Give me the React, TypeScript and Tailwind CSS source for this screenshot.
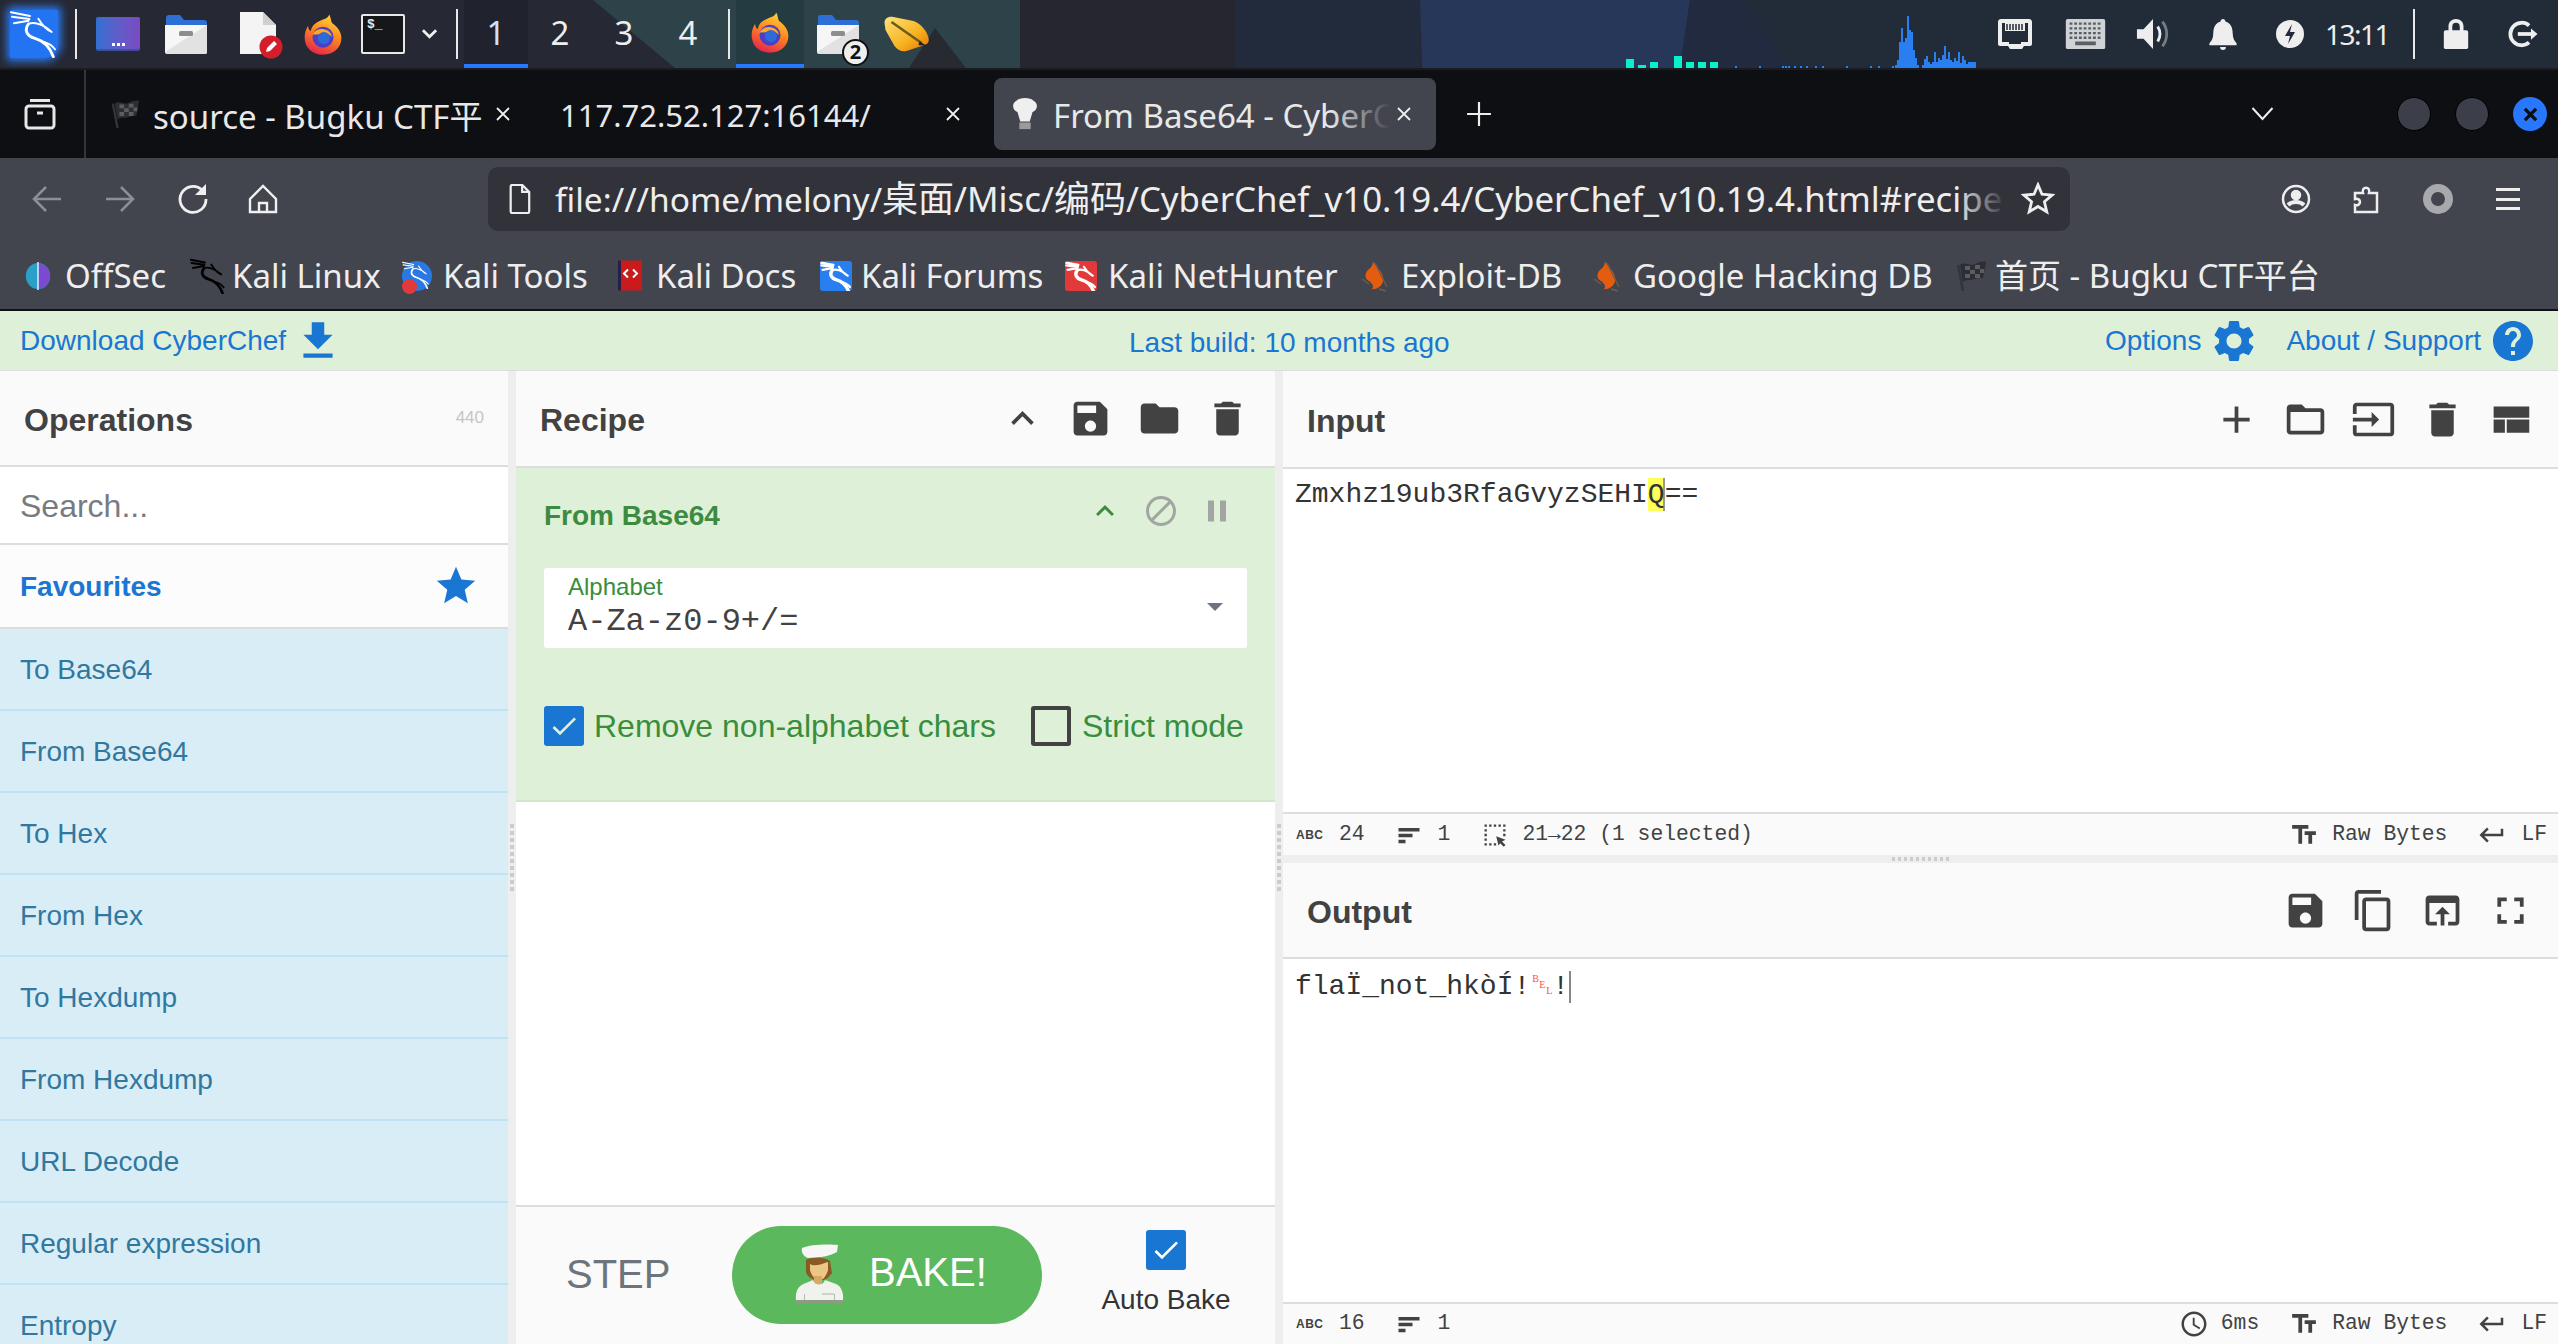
import React from "react";

const P: Record<string, string> = {
  save: "M17 3H5c-1.11 0-2 .9-2 2v14c0 1.1.89 2 2 2h14c1.1 0 2-.9 2-2V7l-4-4zm-5 16c-1.66 0-3-1.34-3-3s1.34-3 3-3 3 1.34 3 3-1.34 3-3 3zm3-10H5V5h10v4z",
  folder: "M10 4H4c-1.1 0-1.99.9-1.99 2L2 18c0 1.1.9 2 2 2h16c1.1 0 2-.9 2-2V8c0-1.1-.9-2-2-2h-8l-2-2z",
  folderOpen: "M20 6h-8l-2-2H4c-1.1 0-1.99.9-1.99 2L2 18c0 1.1.9 2 2 2h16c1.1 0 2-.9 2-2V8c0-1.1-.9-2-2-2zm0 12H4V8h16v10z",
  del: "M6 19c0 1.1.9 2 2 2h8c1.1 0 2-.9 2-2V7H6v12zM19 4h-3.5l-1-1h-5l-1 1H5v2h14V4z",
  up: "M7.41 15.41L12 10.83l4.59 4.58L18 14l-6-6-6 6z",
  block: "M12 2C6.48 2 2 6.48 2 12s4.48 10 10 10 10-4.48 10-10S17.52 2 12 2zM4 12c0-4.42 3.58-8 8-8 1.85 0 3.55.63 4.9 1.69L5.69 16.9C4.63 15.55 4 13.85 4 12zm8 8c-1.85 0-3.55-.63-4.9-1.69L18.31 7.1C19.37 8.45 20 10.15 20 12c0 4.42-3.58 8-8 8z",
  pause: "M6 19h4V5H6v14zm8-14v14h4V5h-4z",
  add: "M19 13h-6v6h-2v-6H5v-2h6V5h2v6h6v2z",
  input: "M21 3.01H3c-1.1 0-2 .9-2 2V9h2V4.99h18v14.03H3V15H1v4.01c0 1.1.9 1.98 2 1.98h18c1.1 0 2-.88 2-1.98v-14c0-1.11-.9-2-2-2zM11 16l4-4-4-4v3H1v2h10v3z",
  view: "M3 19h6v-7H3v7zm7 0h12v-7H10v7zM3 5v6h19V5H3z",
  copy: "M16 1H4c-1.1 0-2 .9-2 2v14h2V3h12V1zm3 4H8c-1.1 0-2 .9-2 2v14c0 1.1.9 2 2 2h11c1.1 0 2-.9 2-2V7c0-1.1-.9-2-2-2zm0 16H8V7h11v14z",
  open: "M19 4H5c-1.11 0-2 .9-2 2v12c0 1.1.89 2 2 2h4v-2H5V8h14v10h-4v2h4c1.1 0 2-.9 2-2V6c0-1.1-.89-2-2-2zm-7 6l-4 4h3v6h2v-6h3l-4-4z",
  full: "M7 14H5v5h5v-2H7v-3zm-2-4h2V7h3V5H5v5zm12 7h-3v2h5v-5h-2v3zM14 5v2h3v3h2V5h-5z",
  tt: "M2.5 4v3h5v12h3V7h5V4h-13zm19 5h-9v3h3v7h3v-7h3V9z",
  ret: "M19 7v4H5.83l3.58-3.59L8 6l-6 6 6 6 1.41-1.41L5.83 13H21V7z",
  time: "M11.99 2C6.47 2 2 6.48 2 12s4.47 10 9.99 10C17.52 22 22 17.52 22 12S17.52 2 11.99 2zM12 20c-4.42 0-8-3.58-8-8s3.58-8 8-8 8 3.58 8 8-3.58 8-8 8zm.5-13H11v6l5.25 3.15.75-1.23-4.5-2.67z",
  settings: "M19.14 12.94c.04-.3.06-.61.06-.94 0-.32-.02-.64-.07-.94l2.03-1.58c.18-.14.23-.41.12-.61l-1.92-3.32c-.12-.22-.37-.29-.59-.22l-2.39.96c-.5-.38-1.03-.7-1.62-.94l-.36-2.54c-.04-.24-.24-.41-.48-.41h-3.84c-.24 0-.43.17-.47.41l-.36 2.54c-.59.24-1.13.57-1.62.94l-2.39-.96c-.22-.08-.47 0-.59.22L2.74 8.87c-.12.21-.08.47.12.61l2.03 1.58c-.05.3-.09.63-.09.94s.02.64.07.94l-2.03 1.58c-.18.14-.23.41-.12.61l1.92 3.32c.12.22.37.29.59.22l2.39-.96c.5.38 1.03.7 1.62.94l.36 2.54c.05.24.24.41.48.41h3.84c.24 0 .44-.17.47-.41l.36-2.54c.59-.24 1.13-.56 1.62-.94l2.39.96c.22.08.47 0 .59-.22l1.92-3.32c.12-.22.07-.47-.12-.61l-2.01-1.58zM12 15.6c-1.98 0-3.6-1.62-3.6-3.6s1.62-3.6 3.6-3.6 3.6 1.62 3.6 3.6-1.62 3.6-3.6 3.6z",
  help: "M12 2C6.48 2 2 6.48 2 12s4.48 10 10 10 10-4.48 10-10S17.52 2 12 2zm1 17h-2v-2h2v2zm2.07-7.75l-.9.92C13.45 12.9 13 13.5 13 15h-2v-.5c0-1.1.45-2.1 1.17-2.83l1.24-1.26c.37-.36.59-.86.59-1.41 0-1.1-.9-2-2-2s-2 .9-2 2H8c0-2.21 1.79-4 4-4s4 1.79 4 4c0 .88-.36 1.68-.93 2.25z",
  down: "M19 9h-4V3H9v6H5l7 7 7-7zM5 18v2h14v-2H5z",
  star: "M12 17.27L18.18 21l-1.64-7.03L22 9.24l-7.19-.61L12 2 9.19 8.63 2 9.24l5.46 4.73L5.82 21z",
  check: "M9 16.17L4.83 12l-1.42 1.41L9 19 21 7l-1.41-1.41z",
  lines: "M3 6h18v3H3zM3 11h12v3H3zM3 16h6v3H3z",
  select: "M3 3h2v2H3zM7 3h2v2H7zM11 3h2v2h-2zM15 3h2v2h-2zM19 3h2v2h-2zM3 7h2v2H3zM19 7h2v2h-2zM3 11h2v2H3zM19 11h2v2h-2zM3 15h2v2H3zM3 19h2v2H3zM7 19h2v2H7zM11 19h2v2h-2zM13 13l8 3-3 1.5 3 3-1.5 1.5-3-3L15 21z",
};

function I({ n, c = "w-[45px] h-[45px] text-[#424242]" }: { n: string; c?: string }) {
  return (
    <svg viewBox="0 0 24 24" className={c} fill="currentColor">
      <path d={P[n]} />
    </svg>
  );
}

function Dragon({ stroke = "#fff", w = 8, c }: { stroke?: string; w?: number; c: string }) {
  return (
    <svg viewBox="0 0 144 144" className={c} fill="none" stroke={stroke} strokeWidth={w} strokeLinecap="round" strokeLinejoin="round">
      <path d="M3 7 60 18M6 20 58 27M12 40 56 32" strokeWidth={w * 0.75} />
      <path d="M55 42C42 60 50 78 75 85C100 92 120 112 130 140" strokeWidth={w * 1.1} />
      <path d="M55 42C70 34 100 42 125 66C110 60 100 50 85 26" strokeWidth={w * 0.7} />
      <path d="M102 96C115 100 128 108 135 118" strokeWidth={w * 0.7} />
    </svg>
  );
}

function Firefox({ c }: { c: string }) {
  return (
    <svg viewBox="0 0 48 48" className={c}>
      <defs>
        <linearGradient id="ffg" x1="0.7" y1="0" x2="0.3" y2="1">
          <stop offset="0" stopColor="#ffd53a" />
          <stop offset="0.45" stopColor="#ff8a1f" />
          <stop offset="1" stopColor="#e5234d" />
        </linearGradient>
      </defs>
      <path d="M31 1c3 5 1 8 5 11 6 5 9 10 9 16 0 11-9 19-21 19S3 39 3 27c0-5 2-10 4-13 0 3 1 5 3 6 1-6 5-9 9-11 5-3 11-3 12-8z" fill="url(#ffg)" />
      <circle cx="24" cy="27" r="12" fill="#4a3fc5" />
      <path d="M12 24c3-5 8-7 13-6 6 1 9 5 9 9-3-4-7-5-12-4-4 1-7 1-10 1z" fill="#ffa52c" />
      <circle cx="25" cy="28" r="7" fill="#2f6bd6" />
    </svg>
  );
}

function FilesIcon({ c }: { c: string }) {
  return (
    <svg viewBox="0 0 44 40" className={c}>
      <path d="M2 4c0-2 1-3 3-3h11l4 5h20c2 0 3 1 3 3v5H2z" fill="#2e6fd6" />
      <path d="M1 11h42v27c0 1-1 2-2 2H3c-1 0-2-1-2-2z" fill="#f6f6f6" />
      <path d="M1 38 43 11v27c0 1-1 2-2 2H3z" fill="#e2e2e2" />
      <rect x="15" y="17" width="14" height="5" rx="1.5" fill="#8d8d8d" />
    </svg>
  );
}

function Pen({ c }: { c: string }) {
  return (
    <svg viewBox="0 0 46 36" className={c}>
      <defs>
        <linearGradient id="peng" x1="0" y1="0" x2="1" y2="1">
          <stop offset="0" stopColor="#ffe27a" />
          <stop offset="0.6" stopColor="#f7b21f" />
          <stop offset="1" stopColor="#e66f08" />
        </linearGradient>
      </defs>
      <path d="M1 7C1 2 5 0 10 1l20 4c8 3 14 11 15 17 1 4-1 6-4 7l-18 6c-5 1-9-1-12-5L2 14z" fill="url(#peng)" />
      <path d="M8 6l30 21" stroke="#6b5a1a" strokeWidth="2.500" />
      <path d="M36 25l7 5-8-1z" fill="#222" />
    </svg>
  );
}

function Flag({ c }: { c: string }) {
  return (
    <svg viewBox="0 0 34 34" className={c}>
      <path d="M3 6 8 32" stroke="#33353c" strokeWidth="2.500" />
      <path d="M5 6c6-4 10 2 15-1 4-2 8-3 11-2l-3 16c-5-1-8 2-13 2-3 0-5 0-7 2z" fill="#2c2e33" />
      <path d="M10 7h5v4h-5zM20 6h5v4h-5zM15 11h5v4h-5zM25 10h4v4h-4zM10 15h5v4h-5zM20 15h5v4h-5z" fill="#5b5d62" />
    </svg>
  );
}

function Flame({ c }: { c: string }) {
  return (
    <svg viewBox="0 0 28 34" className={c}>
      <path d="M12 2c1 5 12 11 10 20-1 6-8 9-11 8 2-2 1-5-3-8-4-2-5-7-1-11 3-2 5-5 5-9z" fill="#e45c0e" />
      <path d="M14 4 26 28M8 25 1 20M18 30l7 2" stroke="#6d5d50" strokeWidth="1.400" fill="none" />
    </svg>
  );
}

function Chef({ c }: { c: string }) {
  return (
    <svg viewBox="33 13 51 60" className={c}>
      <path d="M35 70h49v3H35z" fill="#8d9a84" />
      <path d="M46 30C50 27 65 27 70 31L72 43C68 48 66 50 62 50H55C50 48 47 46 46 42z" fill="#8a5a24" />
      <path d="M50 34C54 37 62 34 68 32V40C66 47 62 51 58 51 54 49 51 44 50 40z" fill="#ecc684" />
      <path d="M54 46h8v9h-8z" fill="#d6a866" />
      <path d="M36 70C35 62 38 55 46 53L53 50C55 56 63 56 65 50L76 54C81 56 84 63 83 70z" fill="#f0f2ee" />
      <path d="M42 18C50 14 70 14 78 15L77 22C70 26 62 27 60 27L48 28C43 26 41 22 42 18z" fill="#f6f6f6" />
      <path d="M62 63h12v2H62z" fill="#cfd2cb" />
      <path d="M44 64h1v6h-1zM74 64h1v6h-1z" fill="#b6b9b0" />
    </svg>
  );
}

const teal: [number, number][] = [[1626, 9], [1638, 3], [1650, 6], [1674, 12], [1686, 6], [1698, 6], [1710, 6]];
const blueBars: [number, number][] = [
  [1735, 2], [1759, 2], [1782, 2], [1785, 2], [1788, 2], [1794, 2], [1800, 2], [1806, 2], [1815, 2], [1822, 2], [1846, 2], [1870, 2], [1878, 2],
  [1892, 2], [1895, 3], [1897, 8], [1899, 26], [1901, 40], [1903, 26], [1905, 30], [1907, 52], [1909, 38], [1911, 36], [1913, 18], [1915, 10], [1917, 3],
  [1922, 3], [1924, 9], [1926, 12], [1928, 6], [1930, 4], [1932, 6], [1934, 16], [1936, 6], [1938, 10], [1940, 8], [1942, 13], [1944, 22], [1946, 9], [1948, 16], [1950, 8], [1952, 6], [1954, 10], [1956, 7], [1958, 16], [1960, 5], [1962, 12], [1964, 8], [1966, 4], [1968, 6], [1970, 6], [1972, 6], [1974, 6],
];

function TaskIconBg() {
  return (
    <svg className="absolute left-0 top-0 w-[2558px] h-[68px]" viewBox="0 0 2558 68" preserveAspectRatio="none">
      <rect width="2558" height="68" fill="#262833" />
      <path d="M593 0 675 68H1020V0z" fill="#2e4349" />
      <path d="M909 68 935 28 966 68z" fill="#272a31" />
      <path d="M1020 0H1235V68H1020z" fill="#26272e" />
      <path d="M1235 0H1420V68H1235z" fill="#222b3b" />
      <path d="M1420 0H1690L1680 68H1422z" fill="#27375a" />
      <path d="M1690 0H1745L1790 68H1680z" fill="#222a40" />
      <path d="M1745 0H2558V68H1790z" fill="#212c38" />
      {teal.map(([x, h]) => (
        <rect key={x} x={x} y={68 - h} width="8" height={h} fill="#0af0c8" />
      ))}
      {blueBars.map(([x, h]) => (
        <rect key={x} x={x} y={68 - h} width="2" height={h} fill="#2a7ff0" />
      ))}
    </svg>
  );
}

function Sep({ c = "" }: { c?: string }) {
  return <div className={`w-[2px] h-[50px] bg-[#e8e8e8] shrink-0 ${c}`} />;
}

function Workspace({ n, active }: { n: string; active?: boolean }) {
  return (
    <div className={`w-[64px] h-[68px] flex items-center justify-center text-[33px] border-b-[4px] pt-[2px] ${active ? "bg-[#20232e] border-[#2777ff] text-[#cfe0ff]" : "border-transparent text-[#eeeeee]"}`}>
      {n}
    </div>
  );
}

function Taskbar() {
  return (
    <div className="relative h-[68px] shrink-0 overflow-hidden" style={{ fontFamily: '"Noto Sans", sans-serif' }}>
      <TaskIconBg />
      <div className="relative flex items-center h-full [&>*]:shrink-0">
        <div className="ml-[10px] w-[48px] h-[48px] rounded-tl-[2px] rounded-br-[14px] bg-[#2274f2] shadow-[0_0_9px_3px_#2b7df5] relative">
          <Dragon c="absolute left-0 top-0 w-[48px] h-[48px]" w={8} />
        </div>
        <Sep c="ml-[17px]" />
        <div className="ml-[19px] w-[44px] h-[34px] rounded-[2px] bg-linear-to-r from-[#2f6fd1] to-[#7a49c2] border-b-[2px] border-[#3d4fa0] flex items-end justify-center pb-[3px] gap-[2px]">
          <span className="w-[3px] h-[3px] bg-white" />
          <span className="w-[3px] h-[3px] bg-white" />
          <span className="w-[3px] h-[3px] bg-white" />
        </div>
        <FilesIcon c="ml-[24px] w-[44px] h-[40px]" />
        <div className="ml-[30px] w-[40px] h-[44px] relative">
          <svg viewBox="0 0 40 44" className="w-[40px] h-[44px]">
            <path d="M2 0h23l13 13v29H2z" fill="#f4f4f4" />
            <path d="M25 0l13 13H25z" fill="#cfcfcf" />
          </svg>
          <svg viewBox="0 0 24 24" className="absolute right-[-5px] bottom-[-3px] w-[24px] h-[24px]">
            <circle cx="12" cy="12" r="11.500" fill="#d21f2a" />
            <path d="M7 17l1-4 7-7 3 3-7 7z" fill="#fff" />
          </svg>
        </div>
        <Firefox c="ml-[24px] w-[42px] h-[43px]" />
        <div className="ml-[17px] w-[44px] h-[40px] border-[2px] border-[#e8e8e8] rounded-[2px] bg-[#16171b] text-[#e8e8e8] text-[13px] leading-[16px] pl-[4px] pt-[1px] font-bold" style={{ fontFamily: '"Liberation Mono", monospace' }}>
          $_
        </div>
        <svg viewBox="0 0 18 12" className="ml-[16px] w-[17px] h-[12px]" fill="none" stroke="#eeeeee" strokeWidth="3">
          <path d="M2 2l7 7 7-7" />
        </svg>
        <Sep c="ml-[18px]" />
        <div className="ml-[6px] flex">
          <Workspace n="1" active />
          <Workspace n="2" />
          <Workspace n="3" />
          <Workspace n="4" />
        </div>
        <Sep c="ml-[8px]" />
        <div className="ml-[6px] w-[68px] h-[68px] bg-[#253b42] border-b-[4px] border-[#2777ff] flex items-center justify-center">
          <Firefox c="w-[42px] h-[43px]" />
        </div>
        <div className="ml-[12px] relative w-[44px] h-[40px]">
          <FilesIcon c="w-[44px] h-[40px]" />
          <div className="absolute right-[-9px] bottom-[-12px] w-[27px] h-[27px] rounded-full bg-[#eeeeee] border-[2px] border-[#111] text-[#111] text-[20px] font-bold leading-[22px] text-center">2</div>
        </div>
        <Pen c="ml-[23px] w-[47px] h-[36px]" />
        <div className="ml-[1068px] flex items-center h-full text-[#eeeeee]">
          <svg viewBox="0 0 34 30" className="w-[34px] h-[30px]">
            <path d="M3 0h28c1.500 0 3 1 3 3v22c0 1-1 2-2 2h-6l-2 3H12l-2-3H2c-1 0-2-1-2-2V3C0 1 1.500 0 3 0z" fill="#eeeeee" />
            <path d="M4 4h26v19h-7v2H11v-2H4z" fill="#212c38" />
            <path d="M7 4h20v8H7z" fill="#eeeeee" />
            <path d="M9 5v6M12 5v6M15 5v6M18 5v6M21 5v6M24 5v6" stroke="#212c38" strokeWidth="1.500" />
          </svg>
          <svg viewBox="0 0 42 32" className="ml-[33px] w-[41px] h-[30px]">
            <rect width="42" height="32" rx="2" fill="#cfd3d6" />
            <path d="M4 5h34M4 10h34M4 15h34M4 20h34" stroke="#5a5f63" strokeWidth="2.500" strokeDasharray="3 2" />
            <rect x="10" y="24" width="22" height="4" fill="#5a5f63" />
          </svg>
          <svg viewBox="0 0 36 36" className="ml-[30px] w-[34px] h-[34px]" fill="none">
            <path d="M1 13h7L18 2v32L8 23H1z" fill="#eeeeee" />
            <path d="M23 10c3 5 3 11 0 16" stroke="#eeeeee" strokeWidth="3" />
            <path d="M28 5c6 8 6 18 0 26" stroke="#777a80" strokeWidth="3" />
          </svg>
          <svg viewBox="0 0 30 34" className="ml-[38px] w-[30px] h-[33px]" fill="#eeeeee">
            <path d="M15 1c1.500 0 2.500 1 2.500 2.500C23 5 25 10 25 16c0 5 2 8 4 10v2H1v-2c2-2 4-5 4-10 0-6 2-11 7.500-12.500C12.500 2 13.500 1 15 1zM12 30h6c0 2-1 3-3 3s-3-1-3-3z" />
          </svg>
          <svg viewBox="0 0 28 28" className="ml-[38px] w-[28px] h-[28px]">
            <circle cx="14" cy="14" r="14" fill="#eeeeee" />
            <path d="M16 4l-7 12h5l-2 8 7-12h-5z" fill="#22293a" />
          </svg>
          <span className="ml-[21px] text-[28px] leading-none tracking-[-1.500px] w-[62px] whitespace-nowrap">13:11</span>
          <Sep c="ml-[26px]" />
          <svg viewBox="0 0 26 32" className="ml-[28px] w-[26px] h-[30px]" fill="#eeeeee">
            <path d="M5 12V8c0-5 3.500-8 8-8s8 3 8 8v4h3c1 0 2 1 2 2v16c0 1-1 2-2 2H2c-1 0-2-1-2-2V14c0-1 1-2 2-2zm4 0h8V8c0-3-2-4-4-4S9 5 9 8z" />
          </svg>
          <svg viewBox="0 0 38 32" className="ml-[35px] w-[37px] h-[30px]" fill="none" stroke="#eeeeee" strokeWidth="4">
            <path d="M26 7a12 12 0 1 0 0 18" />
            <path d="M14 16h18" />
            <path d="M28 10l7 6-7 6z" fill="#eeeeee" stroke="none" />
          </svg>
        </div>
      </div>
    </div>
  );
}

function X({ c = "" }: { c?: string }) {
  return (
    <svg viewBox="0 0 16 16" className={`w-[16px] h-[16px] ${c}`} stroke="#eeeeee" strokeWidth="1.800">
      <path d="M2 2l12 12M14 2 2 14" />
    </svg>
  );
}

function TabBar() {
  return (
    <div className="h-[90px] shrink-0 bg-[#0e0f13] border-t-[2px] border-[#1b1c21] flex items-center text-[#e8e8e8] text-[33px] [&>*]:shrink-0" style={{ fontFamily: '"Noto Sans", "Noto Sans CJK SC", sans-serif' }}>
      <svg viewBox="0 0 32 32" className="ml-[24px] w-[32px] h-[32px]" fill="none" stroke="#e8e8e8" strokeWidth="3">
        <rect x="2" y="8" width="28" height="22" rx="3" />
        <path d="M6 2.500h20" />
        <path d="M13 15h6" />
      </svg>
      <div className="ml-[28px] w-[2px] h-[88px] bg-[#33353a]" />
      <Flag c="ml-[24px] w-[32px] h-[32px]" />
      <span className="ml-[11px] mt-[2px] w-[332px] h-[46px] overflow-hidden whitespace-nowrap relative">
        source - Bugku CTF平
      </span>
      <X c="ml-[10px]" />
      <span className="ml-[49px] mt-[2px] w-[380px] whitespace-nowrap text-[31px]">117.72.52.127:16144/</span>
      <X c="ml-[5px]" />
      <div className="ml-[33px] w-[442px] h-[72px] rounded-[8px] bg-[#42454e] flex items-center relative">
        <svg viewBox="0 0 30 36" className="ml-[16px] w-[30px] h-[34px] shrink-0">
          <path d="M6 4c3-4 15-4 18 0 5 2 5 10-1 12l-3 10H10L7 16C1 14 1 6 6 4z" fill="#efefef" />
          <rect x="9" y="27" width="12" height="7" fill="#9b9b9b" />
        </svg>
        <span className="ml-[13px] w-[337px] shrink-0 h-[46px] overflow-hidden whitespace-nowrap relative">
          From Base64 - CyberChef
          <span className="absolute right-0 top-0 bottom-0 w-[60px] bg-linear-to-r from-transparent to-[#42454e]" />
        </span>
        <X c="ml-[6px] shrink-0" />
      </div>
      <svg viewBox="0 0 24 24" className="ml-[30px] w-[26px] h-[26px]" stroke="#eeeeee" strokeWidth="2">
        <path d="M12 1v22M1 12h22" />
      </svg>
      <svg viewBox="0 0 24 16" className="ml-[758px] w-[25px] h-[16px]" fill="none" stroke="#eeeeee" strokeWidth="2">
        <path d="M2 2l10 11L22 2" />
      </svg>
      <div className="ml-[122px] w-[34px] h-[34px] rounded-full bg-[#3c3f49] border-[1px] border-black" />
      <div className="ml-[24px] w-[34px] h-[34px] rounded-full bg-[#3c3f49] border-[1px] border-black" />
      <div className="ml-[24px] w-[34px] h-[34px] rounded-full bg-[#2777ff] flex items-center justify-center">
        <svg viewBox="0 0 16 16" className="w-[15px] h-[15px]" stroke="#0b0c10" strokeWidth="3.500">
          <path d="M2 2l12 12M14 2 2 14" />
        </svg>
      </div>
    </div>
  );
}

function NavBar() {
  return (
    <div className="h-[82px] shrink-0 bg-[#42454e] flex items-center [&>*]:shrink-0" style={{ fontFamily: '"Noto Sans", "Noto Sans CJK SC", sans-serif' }}>
      <svg viewBox="0 0 30 30" className="ml-[32px] w-[30px] h-[30px]" fill="none" stroke="#8d8f95" strokeWidth="2.500">
        <path d="M29 15H2M14 3 2 15l12 12" />
      </svg>
      <svg viewBox="0 0 30 30" className="ml-[43px] w-[30px] h-[30px]" fill="none" stroke="#8d8f95" strokeWidth="2.500">
        <path d="M1 15h27M16 3l12 12-12 12" />
      </svg>
      <svg viewBox="0 0 30 30" className="ml-[43px] w-[30px] h-[30px]" fill="none" stroke="#f0f0f0" strokeWidth="2.800">
        <path d="M24 6a13 13 0 1 0 4 9" />
        <path d="M28 0v11H17z" fill="#f0f0f0" stroke="none" />
      </svg>
      <svg viewBox="0 0 30 30" className="ml-[40px] w-[30px] h-[30px]" fill="none" stroke="#f0f0f0" strokeWidth="2.400">
        <path d="M2 15 15 2l13 13v13H2zM11 28v-9h8v9" />
      </svg>
      <div className="ml-[210px] w-[1582px] h-[64px] rounded-[10px] bg-[#32333a] flex items-center text-[#eeeeee] text-[33.500px]">
        <svg viewBox="0 0 26 34" className="ml-[19px] w-[25px] h-[30px] shrink-0" fill="none" stroke="#eeeeee" strokeWidth="2.500">
          <path d="M3 3c0-1 1-2 2-2h11l8 8v22c0 1-1 2-2 2H5c-1 0-2-1-2-2z" />
          <path d="M16 1v8h8" />
        </svg>
        <span className="ml-[23px] w-[1451px] h-[50px] leading-[50px] shrink-0 overflow-hidden whitespace-nowrap relative">
          file:///home/melony/<span className="text-[36px]">桌面</span><span className="text-[34.800px]">/Misc/</span><span className="text-[36px]">编码</span><span className="text-[34.800px]">/CyberChef_v10.19.4/CyberChef_v10.19.4.html#recipe</span>
          <span className="absolute right-0 top-0 bottom-0 w-[50px] bg-linear-to-r from-transparent to-[#32333a]" />
        </span>
        <svg viewBox="0 0 24 24" className="ml-[15px] w-[34px] h-[34px] shrink-0" fill="none" stroke="#eeeeee" strokeWidth="2">
          <path d={P.star} />
        </svg>
      </div>
      <svg viewBox="0 0 30 30" className="ml-[211px] w-[30px] h-[30px]" fill="none" stroke="#eeeeee" strokeWidth="2.500">
        <circle cx="15" cy="15" r="13" />
        <circle cx="15" cy="11" r="4" fill="#eeeeee" />
        <path d="M7 21c4-4 12-4 16 0" strokeWidth="4" />
      </svg>
      <svg viewBox="0 0 30 30" className="ml-[41px] w-[30px] h-[32px]" fill="none" stroke="#eeeeee" strokeWidth="2.500">
        <path d="M3 28V21c3 1 5-1 5-3s-2-4-5-3V9h8c-2-7 8-7 6 0h8v19z" />
      </svg>
      <div className="ml-[41px] w-[30px] h-[30px] rounded-full border-[8px] border-[#a8a9ad]" />
      <div className="ml-[43px] w-[24px] h-[22px] flex flex-col justify-between">
        <div className="h-[3px] bg-[#eeeeee]" />
        <div className="h-[3px] bg-[#eeeeee]" />
        <div className="h-[3px] bg-[#eeeeee]" />
      </div>
    </div>
  );
}

function Bm({ icon, text, c = "" }: { icon: React.ReactNode; text: string; c?: string }) {
  return (
    <div className={`flex items-center shrink-0 ${c}`}>
      {icon}
      <span className="whitespace-nowrap">{text}</span>
    </div>
  );
}

function Bookmarks() {
  return (
    <div className="h-[71px] shrink-0 bg-[#42454e] border-b-[2px] border-[#111] flex items-center text-[#eeeeee] text-[33px] pl-[25px] pt-[2px]" style={{ fontFamily: '"Noto Sans", "Noto Sans CJK SC", sans-serif' }}>
      <Bm
        c="w-[165px]"
        text="OffSec"
        icon={
          <svg viewBox="0 0 26 32" className="w-[26px] h-[30px] mr-[14px]">
            <ellipse cx="13" cy="16" rx="13" ry="14" fill="#2a9fc9" />
            <path d="M13 2c7 1 13 6 13 14S20 29 13 30z" fill="#7a4ad0" />
            <path d="M13 1v30" stroke="#dff" strokeWidth="1.500" />
          </svg>
        }
      />
      <Bm c="w-[212px]" text="Kali Linux" icon={<Dragon stroke="#000" w={10} c="w-[36px] h-[36px] mr-[6px]" />} />
      <Bm
        c="w-[216px]"
        text="Kali Tools"
        icon={
          <div className="relative w-[30px] h-[30px] mr-[11px] rounded-full bg-[#2a78e4]">
            <Dragon c="w-[28px] h-[28px]" w={8} />
            <div className="absolute left-0 bottom-[-3px] w-[15px] h-[15px] rounded-full bg-[#e23a3a]" />
          </div>
        }
      />
      <Bm
        c="w-[202px]"
        text="Kali Docs"
        icon={
          <svg viewBox="0 0 24 30" className="w-[24px] h-[31px] mr-[14px]">
            <rect width="24" height="30" fill="#c91b1b" />
            <rect width="3" height="30" fill="#23224a" />
            <path d="M10 9l-4 4 4 4M15 9l4 4-4 4" stroke="#fff" strokeWidth="2" fill="none" />
          </svg>
        }
      />
      <Bm
        c="w-[245px]"
        text="Kali Forums"
        icon={
          <div className="w-[32px] h-[30px] mr-[9px] bg-[#2a7ff0] rounded-[3px] overflow-hidden">
            <Dragon c="w-[32px] h-[32px]" w={14} />
          </div>
        }
      />
      <Bm
        c="w-[295px]"
        text="Kali NetHunter"
        icon={
          <div className="w-[32px] h-[30px] mr-[11px] bg-[#e23a3a] rounded-[3px] overflow-hidden">
            <Dragon c="w-[32px] h-[32px]" w={14} />
          </div>
        }
      />
      <Bm c="w-[232px]" text="Exploit-DB" icon={<Flame c="w-[30px] h-[34px] mr-[11px]" />} />
      <Bm c="w-[363px]" text="Google Hacking DB" icon={<Flame c="w-[30px] h-[34px] mr-[11px]" />} />
      <Bm text="首页 - Bugku CTF平台" icon={<Flag c="w-[34px] h-[34px] mr-[6px]" />} />
    </div>
  );
}

function Banner() {
  return (
    <div className="h-[59px] shrink-0 bg-[#dff0d8] flex items-center text-[#1976d2] text-[28px] relative">
      <div className="flex-1 flex items-center pl-[20px]">
        <span>Download CyberChef</span>
        <I n="down" c="ml-[7px] w-[50px] h-[50px] text-[#1976d2]" />
      </div>
      <span className="absolute left-[1129px] top-[11px]">Last build: 10 months ago</span>
      <div className="flex items-center pr-[21px]">
        <span>Options</span>
        <I n="settings" c="ml-[8px] w-[50px] h-[50px] text-[#1976d2]" />
        <span className="ml-[27px]">About / Support</span>
        <I n="help" c="ml-[8px] w-[48px] h-[48px] text-[#1976d2]" />
      </div>
    </div>
  );
}

function Head({ title, children, c = "" }: { title: string; children?: React.ReactNode; c?: string }) {
  return (
    <div className={`shrink-0 bg-[#fafafa] border-b-[2px] border-[#dddddd] flex items-center pl-[24px] pr-[13px] ${c}`}>
      <span className="text-[32px] font-bold text-[#424242] flex-1 pt-[3px]">{title}</span>
      {children}
    </div>
  );
}

function Btn({ n, c }: { n: string; c?: string }) {
  return (
    <div className="w-[68.500px] flex items-center justify-center">
      <I n={n} c={c} />
    </div>
  );
}

const ops = ["To Base64", "From Base64", "To Hex", "From Hex", "To Hexdump", "From Hexdump", "URL Decode", "Regular expression", "Entropy"];

function Operations() {
  return (
    <div className="w-[508px] shrink-0 bg-white flex flex-col overflow-hidden">
      <div className="h-[96px] shrink-0 bg-[#fafafa] border-b-[2px] border-[#dddddd] flex items-center justify-between pl-[24px] pr-[24px]">
        <span className="text-[32px] font-bold text-[#424242] pt-[3px]">Operations</span>
        <span className="text-[17px] text-[#c5c5c5]">440</span>
      </div>
      <div className="h-[78px] shrink-0 border-b-[2px] border-[#dddddd] flex items-center pl-[20px] pt-[2px] text-[32px] text-[#777b80]">Search...</div>
      <div className="h-[84px] shrink-0 border-b-[2px] border-[#dddddd] flex items-center justify-between pl-[20px] pr-[29px] bg-[#fcfcfc]">
        <span className="text-[28px] font-bold text-[#1976d2] pt-[2px]">Favourites</span>
        <I n="star" c="w-[46px] h-[46px] text-[#1976d2]" />
      </div>
      {ops.map((o) => (
        <div key={o} className="h-[82px] shrink-0 bg-[#d9edf7] border-b-[2px] border-[#bfe3f2] flex items-center pl-[20px] pt-[2px] text-[28px] text-[#31789f]">
          {o}
        </div>
      ))}
    </div>
  );
}

function Gutter() {
  return (
    <div className="w-[8px] shrink-0 bg-[#eeeeee] flex flex-col items-center justify-center gap-[3px]">
      {[0, 1, 2, 3, 4, 5, 6, 7, 8, 9].map((i) => (
        <div key={i} className="w-[4px] h-[4px] bg-[#cccccc]" />
      ))}
    </div>
  );
}

function Recipe() {
  return (
    <div className="w-[759px] shrink-0 bg-white flex flex-col">
      <Head title="Recipe" c="h-[97px]">
        <Btn n="up" />
        <Btn n="save" />
        <Btn n="folder" />
        <Btn n="del" />
      </Head>
      <div className="h-[334px] shrink-0 bg-[#dff0d8] border-b-[2px] border-[#d3e6ca] px-[28px] flex flex-col">
        <div className="h-[100px] shrink-0 flex items-center justify-between">
          <span className="text-[28px] font-bold text-[#3d8b40] pb-[4px]">From Base64</span>
          <div className="flex items-center pr-[12px] pb-[14px] gap-[20px]">
            <I n="up" c="w-[36px] h-[36px] text-[#3d8b40]" />
            <I n="block" c="w-[36px] h-[36px] text-[#a2a5a2]" />
            <I n="pause" c="w-[36px] h-[36px] text-[#a2a5a2]" />
          </div>
        </div>
        <div className="h-[80px] shrink-0 bg-white rounded-[3px] flex flex-col pl-[24px] relative">
          <span className="text-[24px] leading-[26px] mt-[6px] text-[#388e3c]">Alphabet</span>
          <span className="text-[32px] leading-[38px] mt-[3px] text-[#424242]" style={{ fontFamily: '"Liberation Mono", monospace' }}>A-Za-z0-9+/=</span>
          <div className="absolute right-[24px] top-[35px] w-0 h-0 border-x-[8px] border-t-[8px] border-x-transparent border-t-[#6c757d]" />
        </div>
        <div className="mt-[58px] flex items-center [&>*]:shrink-0">
          <div className="w-[40px] h-[40px] rounded-[3px] bg-[#1976d2] flex items-center justify-center">
            <I n="check" c="w-[32px] h-[32px] text-[#dff0d8]" />
          </div>
          <span className="ml-[10px] text-[32px] leading-[40px] whitespace-nowrap text-[#388e3c]">Remove non-alphabet chars</span>
          <div className="ml-[35px] w-[40px] h-[40px] rounded-[3px] border-[4px] border-[#424242]" />
          <span className="ml-[11px] text-[32px] leading-[40px] whitespace-nowrap text-[#388e3c]">Strict mode</span>
        </div>
      </div>
      <div className="flex-1" />
      <div className="h-[139px] shrink-0 bg-[#fafafa] border-t-[2px] border-[#dddddd] flex items-start">
        <span className="ml-[50px] mt-[42px] text-[40px] leading-[50px] text-[#6c757d] w-[166px]">STEP</span>
        <div className="mt-[19px] w-[310px] h-[98px] rounded-[49px] bg-[#5cb85c] flex items-center text-white text-[40px]">
          <Chef c="ml-[61px] w-[51px] h-[60px] mb-[4px]" />
          <span className="ml-[25px] pb-[6px]">BAKE!</span>
        </div>
        <div className="ml-[60px] mt-[23px] w-[128px] flex flex-col items-center">
          <div className="w-[40px] h-[40px] rounded-[3px] bg-[#1976d2] flex items-center justify-center">
            <I n="check" c="w-[32px] h-[32px] text-white" />
          </div>
          <span className="mt-[14px] text-[28px] leading-[32px] text-[#333333] whitespace-nowrap">Auto Bake</span>
        </div>
      </div>
    </div>
  );
}

function SI({ n, c = "w-[28px] h-[28px]" }: { n: string; c?: string }) {
  return <I n={n} c={`${c} text-[#424242]`} />;
}

function Abc() {
  return <span className="w-[24px] text-[12px] font-bold tracking-[0.5px]" style={{ fontFamily: '"Liberation Sans", sans-serif' }}>ABC</span>;
}

function IO() {
  const mono = { fontFamily: '"Liberation Mono", monospace' };
  return (
    <div className="flex-1 bg-white flex flex-col min-w-0">
      <Head title="Input" c="h-[98px]">
        <Btn n="add" />
        <Btn n="folderOpen" />
        <Btn n="input" />
        <Btn n="del" />
        <Btn n="view" />
      </Head>
      <div className="h-[343px] shrink-0 pl-[12px] pt-[8px] text-[28px] leading-[36px] text-[#333333]" style={mono}>
        Zmxhz19ub3RfaGvyzSEHI<span className="inline-block w-[16.800px] leading-[33px] bg-[#ffff5a] border-r-[2px] border-[#999999] box-border">Q</span>==
      </div>
      <div className="h-[43px] shrink-0 bg-[#fafafa] border-t-[2px] border-[#dddddd] flex items-center pl-[13px] pr-[11px] text-[21.330px] text-[#424242]" style={mono}>
        <Abc />
        <span className="ml-[19px]">24</span>
        <SI n="lines" c="ml-[30px] w-[28px] h-[28px]" />
        <span className="ml-[15px]">1</span>
        <SI n="select" c="ml-[31px] w-[28px] h-[28px]" />
        <span className="ml-[13px]">21→22 (1 selected)</span>
        <div className="flex-1" />
        <SI n="tt" c="w-[30px] h-[30px]" />
        <span className="ml-[13px]">Raw Bytes</span>
        <SI n="ret" c="ml-[30px] w-[30px] h-[30px]" />
        <span className="ml-[14px]">LF</span>
      </div>
      <div className="h-[8px] shrink-0 bg-[#eeeeee] flex items-center justify-center gap-[3px]">
        {[0, 1, 2, 3, 4, 5, 6, 7, 8, 9].map((i) => (
          <div key={i} className="w-[3px] h-[4px] bg-[#cccccc]" />
        ))}
      </div>
      <Head title="Output" c="h-[96px]">
        <Btn n="save" />
        <Btn n="copy" />
        <Btn n="open" />
        <Btn n="full" />
      </Head>
      <div className="flex-1 pl-[12px] pt-[10px] text-[28px] leading-[36px] text-[#333333] flex items-start" style={mono}>
        <span>flaÏ_not_hkòÍ!</span>
        <span className="w-[22px] h-[36px] relative text-[#ff4d4d] text-[10px] leading-[10px]" style={{ fontFamily: '"Liberation Serif", serif' }}>
          <span className="absolute left-[2px] top-[5px]">B</span>
          <span className="absolute left-[9px] top-[11px]">E</span>
          <span className="absolute left-[16px] top-[17px]">L</span>
        </span>
        <span>!</span>
        <div className="w-[2px] h-[32px] bg-[#888888] mt-[2px]" />
      </div>
      <div className="h-[42px] shrink-0 bg-[#fafafa] border-t-[2px] border-[#dddddd] flex items-center pl-[13px] pr-[11px] text-[21.330px] text-[#424242]" style={mono}>
        <Abc />
        <span className="ml-[19px]">16</span>
        <SI n="lines" c="ml-[30px] w-[28px] h-[28px]" />
        <span className="ml-[15px]">1</span>
        <div className="flex-1" />
        <SI n="time" c="w-[30px] h-[30px]" />
        <span className="ml-[12px]">6ms</span>
        <SI n="tt" c="ml-[30px] w-[30px] h-[30px]" />
        <span className="ml-[13px]">Raw Bytes</span>
        <SI n="ret" c="ml-[30px] w-[30px] h-[30px]" />
        <span className="ml-[14px]">LF</span>
      </div>
    </div>
  );
}

export default function App() {
  return (
    <div className="w-[2558px] h-[1344px] overflow-hidden flex flex-col bg-white" style={{ fontFamily: '"Liberation Sans", sans-serif' }}>
      <Taskbar />
      <TabBar />
      <NavBar />
      <Bookmarks />
      <Banner />
      <div className="flex-1 flex min-h-0 border-t-[1px] border-[#dddddd]">
        <Operations />
        <Gutter />
        <Recipe />
        <Gutter />
        <IO />
      </div>
    </div>
  );
}
